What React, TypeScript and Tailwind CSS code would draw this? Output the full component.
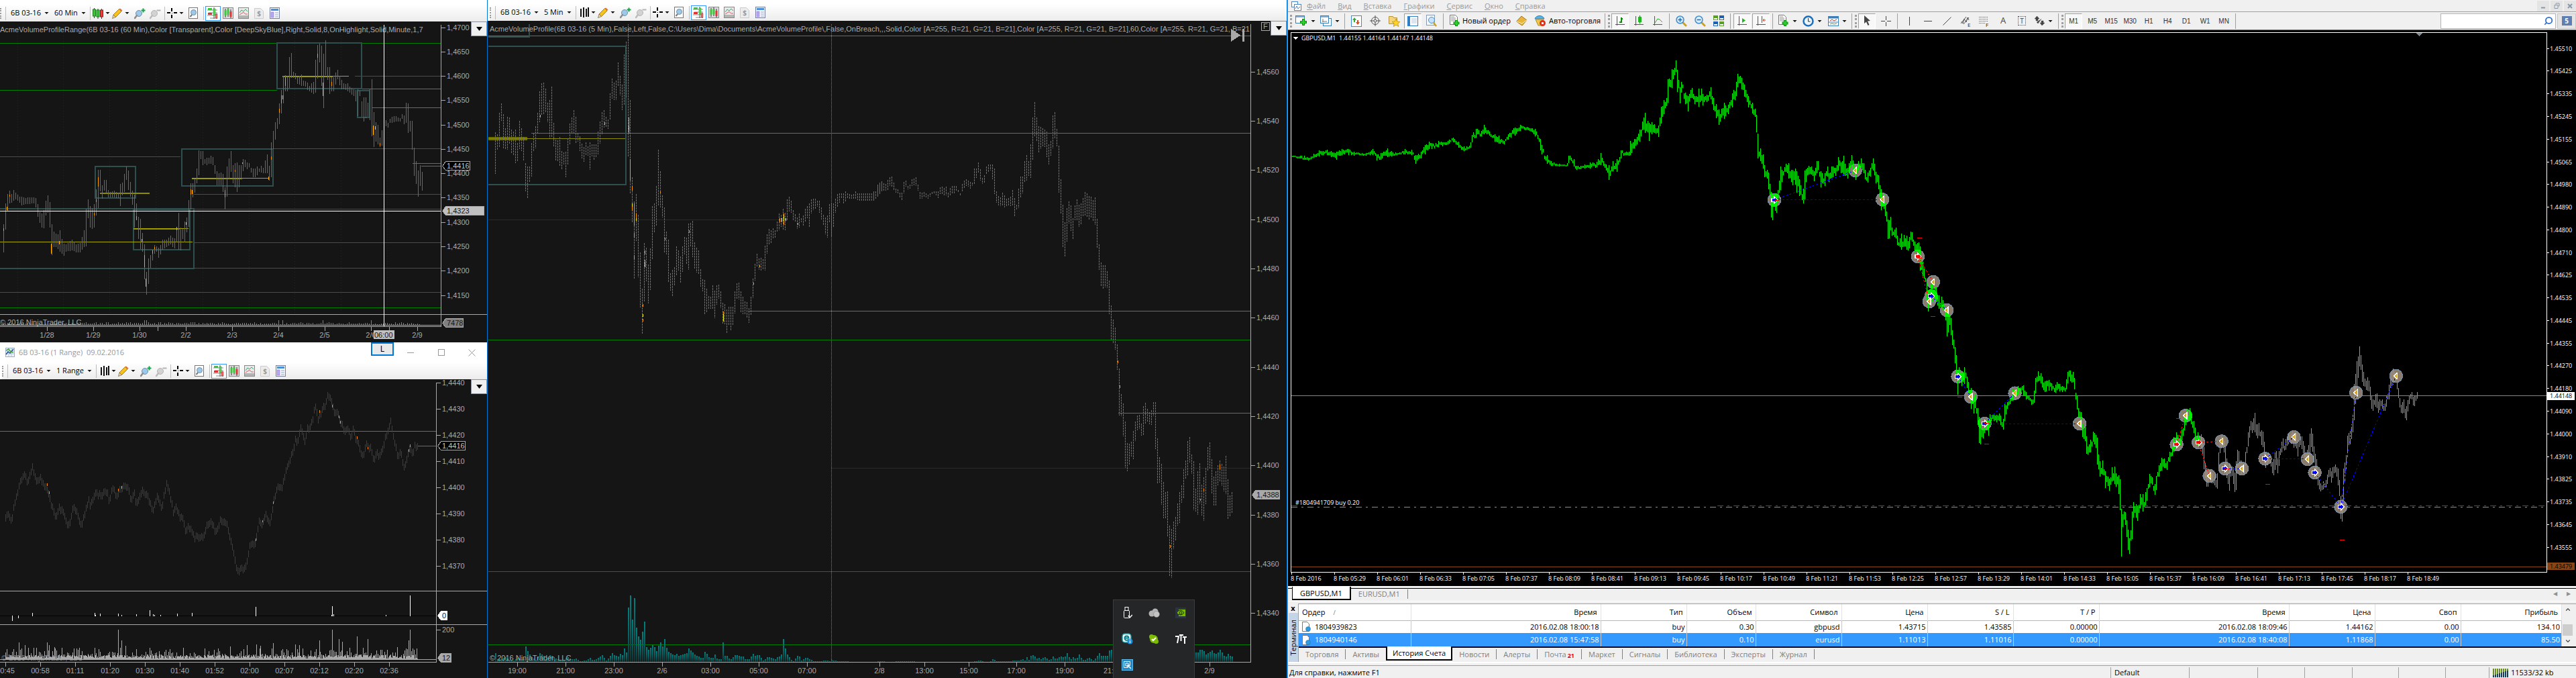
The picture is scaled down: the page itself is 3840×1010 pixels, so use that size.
import React from 'react'
import { ChevronDown, ChevronUp, Search } from 'lucide-react'

type Bar = [number, number, number]
type Point = [number, number]

type Frame = {
    x0: number
    y0: number
    kx: number
    ky: number
}

// every series keeps its own units, a frame turns them into pixels
const HOUR: Frame = { x0: 0, y0: 0, kx: 0.4656, ky: 1 / 3 }
const RANGE: Frame = { x0: 0, y0: 500, kx: 0.4656, ky: 1 / 3 }
const FIVE_A: Frame = { x0: 720, y0: 0, kx: 0.38265, ky: 1 / 3 }
const FIVE_B: Frame = { x0: 1300, y0: 0, kx: 0.40816, ky: 1 / 3 }
const MT_A: Frame = { x0: 1920, y0: 0, kx: 0.61224, ky: 1 / 3 }
const MT_B: Frame = { x0: 2560, y0: 220, kx: 0.45918, ky: 0.40816 }
const MT_C: Frame = { x0: 3180, y0: 460, kx: 0.42092, ky: 1 / 3 }

const HOUR_BARS: Bar[] = [
    [10,1003,1125],[16,912,1030],[22,870,945],[29,850,905],[35,868,905],[42,850,893],[50,862,888],[60,880,900],[68,878,915],[80,884,910],
    [92,880,910],[105,884,905],[112,880,915],[118,900,960],[125,948,990],[131,955,1010],[138,945,1025],[145,900,960],[151,870,940],[158,900,1010],
    [164,1000,1140],[171,1035,1100],[178,1044,1100],[184,1048,1110],[190,1025,1120],[197,1070,1130],[203,1090,1142],[210,1092,1120],[222,1078,1120],
    [229,1070,1115],[242,1092,1125],[255,1085,1125],[262,1055,1112],[268,1028,1100],[274,935,1100],[281,888,965],[288,925,1020],[294,932,1020],
    [300,912,1015],[307,840,955],[313,758,925],[319,755,850],[326,830,885],[332,805,850],[338,798,860],[345,850,880],[352,858,878],[364,852,880],
    [377,862,882],[384,820,920],[390,818,870],[396,780,860],[403,744,800],[409,758,845],[415,808,870],[422,850,905],[428,865,1020],[435,905,970],
    [441,968,1060],[448,978,1110],[454,1036,1110],[461,1090,1245],[467,1220,1318],[474,1155,1265],[480,1140,1195],[487,1115,1160],[493,1095,1130],
    [499,1100,1118],[506,1108,1148],[512,1098,1135],[519,1070,1112],[532,1070,1100],[545,1052,1090],[557,1070,1110],[564,1015,1080],[570,945,1112],
    [577,1018,1115],[583,1025,1065],[590,990,1080],[596,975,1035],[602,905,1020],[609,820,935],[615,820,880],[622,800,860],[628,760,820],
    [635,672,780],[641,675,705],[648,675,735],[654,710,728],[660,706,735],[667,705,730],[674,697,730],[680,700,735],[686,735,770],[693,765,825],
    [699,775,825],[706,770,825],[712,775,850],[719,840,935],[725,745,880],[731,712,800],[738,673,765],[744,740,815],[751,730,835],[757,725,855],
    [764,738,835],[770,740,800],[776,712,765],[783,715,745],[789,725,755],[796,730,745],[802,750,765],[809,752,790],[815,755,790],[822,745,780],
    [828,755,765],[835,742,768],[841,752,770],[848,715,770],[854,690,770],[860,750,805],[867,635,790],[873,588,665],[880,545,620],[886,530,575],
    [893,458,550],[899,405,505],[905,340,465],[912,335,405],[918,350,405],[925,255,390],[931,232,345],[938,322,345],[944,325,350],[950,345,370],
    [957,340,375],[963,330,380],[970,360,380],[977,362,385],[983,370,400],[990,385,405],[996,372,412],[1002,370,418],[1009,262,410],[1015,200,350],
    [1021,195,265],[1028,205,380],[1034,245,490],[1041,178,330],[1047,300,350],[1054,300,420],[1060,345,405],[1067,345,405],[1073,325,375],
    [1079,310,350],[1086,340,378],[1092,355,395],[1099,373,395],[1105,375,400],[1112,372,405],[1118,388,410],[1124,392,420],[1131,400,425],
    [1137,402,445],[1144,398,515],[1150,400,420],[1157,455,520],[1163,435,540],[1170,435,525],[1176,460,520],[1182,405,525],[1189,350,605],
    [1195,495,655],[1201,545,630],[1208,555,640],[1215,615,655],[1221,585,650],[1228,545,600],[1234,535,560],[1240,550,570],[1247,530,545],
    [1254,520,545],[1266,520,540],[1279,530,540],[1286,508,528],[1292,518,552],[1299,455,545],[1305,462,590],[1311,540,578],[1318,540,665],
    [1324,655,780],[1331,720,820],[1337,765,878],[1343,735,825],[1350,770,850],[1356,698,845],
]

const HOUR_SPECKS: Bar[] = [
    [10,1020,1030],[22,925,935],[29,870,875],[164,1090,1130],[190,1078,1090],[300,950,960],[307,890,900],[313,792,832],[435,965,980],[454,1068,1078],
    [461,1140,1190],[467,1245,1278],[487,1118,1130],[493,1105,1110],[564,1015,1025],[596,992,1002],[609,845,868],[615,850,865],[719,848,880],
    [751,760,766],[776,725,730],[860,790,800],[867,700,712],[893,485,500],[899,425,458],[905,425,440],[912,345,380],[1015,240,255],[1034,370,425],
    [1060,365,380],[1195,560,600],[1201,565,575],[1215,640,648],[1228,550,560],
]

const RANGE_LINE: Point[] = [
    [18,815],[27,790],[38,830],[48,735],[65,655],[78,620],[90,655],[103,590],[118,660],[128,625],[140,670],[150,680],[160,735],[178,810],[190,760],
    [205,800],[220,850],[238,755],[258,850],[275,780],[283,725],[290,755],[305,700],[320,715],[340,695],[350,730],[362,680],[375,715],[388,680],
    [408,670],[420,730],[428,695],[438,755],[455,690],[470,715],[490,775],[505,720],[518,770],[534,650],[555,780],[565,770],[577,820],[583,805],
    [595,875],[603,850],[625,910],[630,895],[640,900],[650,895],[668,835],[678,830],[690,885],[706,820],[722,830],[735,890],[750,990],[763,1060],
    [770,1040],[785,1045],[800,940],[818,935],[830,830],[840,840],[853,800],[863,840],[878,730],[890,670],[902,690],[915,610],[935,530],[948,455],
    [953,480],[963,410],[975,480],[985,410],[990,430],[1011,310],[1018,375],[1025,360],[1040,310],[1050,265],[1058,280],[1070,335],[1080,335],
    [1100,420],[1115,425],[1125,450],[1130,415],[1148,490],[1160,540],[1175,485],[1185,500],[1198,555],[1206,520],[1215,545],[1230,475],[1240,430],
    [1250,380],[1262,460],[1274,545],[1282,510],[1296,595],[1310,500],[1322,525],[1330,490],[1337,490],
]

const RANGE_SPECKS: Bar[] = [
    [151,660,669],[156,696,705],[377,684,693],[388,672,681],[819,906,915],[839,824,832],[875,741,750],[1023,333,342],[1064,309,318],[1084,357,366],
    [1088,381,390],[1142,450,459],[1178,497,504],[1309,507,516],[1313,486,495],
]

const RANGE_DELTA: Point[] = [
    [38,1272],[59,1260],[104,1239],[302,1239],[306,1247],[319,1242],[378,1242],[388,1248],[435,1245],[480,1227],[490,1245],[495,1248],[514,1248],
    [568,1242],[615,1239],[819,1212],[1062,1248],[1064,1209],[1068,1245],[1236,1248],[1313,1161],
]

const RANGE_VOLUME: Point[] = [
    [61,1370],[79,1382],[150,1371],[156,1383],[174,1392],[236,1398],[302,1395],[377,1315],[388,1362],[402,1386],[436,1400],[480,1395],[655,1397],
    [736,1389],[790,1383],[820,1380],[833,1385],[875,1374],[944,1380],[957,1382],[1023,1362],[1064,1315],[1084,1355],[1096,1368],[1142,1344],
    [1178,1356],[1272,1391],[1309,1361],[1313,1314],
]

const FIVE_BARS_A: Bar[] = [
    [48,590,775],[56,600,665],[64,500,655],[72,460,530],[80,515,675],[88,580,665],[96,515,665],[104,525,635],[111,580,685],[119,590,690],[127,578,728],
    [135,645,720],[143,525,655],[151,580,675],[158,612,720],[166,735,860],[174,745,885],[182,745,805],[190,625,785],[198,590,655],[206,558,660],
    [213,500,590],[221,402,540],[229,370,510],[237,370,510],[244,395,500],[252,460,545],[260,447,620],[268,382,610],[276,565,655],[284,630,720],
    [292,625,720],[299,612,740],[307,678,752],[315,680,730],[323,678,795],[331,612,730],[339,545,630],[346,525,590],[354,492,595],[362,525,640],
    [370,600,630],[378,610,675],[386,645,710],[394,660,720],[402,633,690],[410,660,695],[417,633,762],[425,645,690],[433,645,718],[441,645,697],
    [449,578,685],[457,535,630],[464,500,595],[472,492,565],[480,525,565],[488,535,575],[495,415,530],[503,348,435],[511,370,445],[519,360,445],
    [527,270,375],[535,348,430],[543,382,497],[550,237,465],[558,183,430],[566,110,720],[573,435,860],[581,790,985],[589,900,1245],[597,865,1070],
    [605,965,1245],[613,1140,1380],[621,1305,1500],[629,1062,1325],[636,1107,1255],[644,1185,1355],[652,1107,1290],[660,910,1150],[668,910,1025],
    [676,823,1005],[683,667,915],[691,765,925],[699,878,970],[707,930,1135],[715,1042,1135],[723,1075,1270],[731,1240,1300],[738,1205,1322],
    [746,1195,1270],[754,1095,1225],[762,1120,1205],[770,1150,1270],[778,1095,1205],[786,1053,1125],[793,1062,1180],[801,997,1205],[809,997,1092],
    [817,987,1150],[825,1095,1205],[833,1107,1215],[840,1120,1225],[848,1205,1280],[856,1250,1300],[864,1250,1412],[872,1293,1390],[880,1327,1380],
    [888,1325,1375],[895,1272,1380],[903,1300,1420],[911,1272,1355],[919,1272,1330],[927,1305,1380],[935,1360,1455],[943,1360,1445],[950,1383,1488],
    [958,1370,1445],[966,1370,1480],[974,1372,1445],[982,1293,1390],[990,1260,1325],[997,1262,1335],[1005,1305,1400],[1013,1327,1400],
    [1021,1350,1400],[1029,1350,1420],[1037,1383,1445],[1045,1315,1400],[1052,1240,1325],[1060,1173,1245],[1068,1130,1185],[1076,1160,1205],
    [1084,1150,1205],[1092,1160,1200],[1099,1095,1205],[1107,1042,1125],[1115,1020,1090],[1123,1030,1085],[1131,1020,1060],[1138,1030,1060],
    [1146,987,1035],[1154,953,1025],[1162,960,1010],[1170,930,1025],[1178,953,1025],[1185,888,980],[1193,878,940],[1201,898,950],[1209,942,985],
    [1217,960,990],[1225,975,1025],[1232,953,1015],[1240,975,990],[1248,963,1005],[1256,930,985],[1264,920,970],[1272,908,1018],[1280,888,940],
    [1295,888,930],[1303,898,920],[1311,898,950],[1319,930,980],[1327,963,1005],[1335,975,1050],[1342,963,1058],[1350,908,985],[1358,908,1058],
    [1366,908,1005],[1374,885,940],[1382,865,920],[1397,865,885],[1405,865,907],[1413,855,895],[1421,865,885],[1440,872,885],[1452,855,885],
    [1460,865,893],[1480,865,893],[1500,865,893],[1520,865,893],[1530,855,885],[1538,823,875],[1553,810,855],[1565,825,850],
]

const FIVE_SPECKS_A: Bar[] = [
    [221,513,521],[472,545,555],[566,525,595],[573,712,805],[581,832,850],[581,920,938],[589,908,1005],[589,1042,1058],[589,1140,1158],[597,955,985],
    [621,1360,1368],[621,1425,1434],[629,1120,1135],[629,1160,1172],[691,855,862],[707,1062,1072],[801,1030,1038],[935,1393,1405],[1052,1262,1270],
    [1076,1185,1192],[1154,975,990],[1162,985,990],[1170,953,1003],[1225,995,1003],
]

const FIVE_YELLOW_A: Bar[] = [
    [566,565,580],[581,908,920],[597,975,985],[621,1404,1414],[629,1173,1192],[935,1405,1435],[1162,975,985],[1170,963,985],[1178,975,985],
]

const FIVE_BARS_B: Bar[] = [
    [5,855,893],[13,855,885],[21,823,875],[29,820,860],[36,810,850],[44,823,850],[51,823,850],[58,800,850],[66,790,820],[73,790,840],[80,823,850],
    [88,850,860],[95,845,860],[102,865,885],[110,860,893],[117,798,850],[124,810,825],[132,840,850],[146,798,825],[154,798,825],[161,790,830],
    [168,832,855],[176,865,893],[190,858,875],[205,870,885],[220,855,860],[235,855,870],[242,855,885],[249,832,860],[264,840,870],[271,832,870],
    [278,865,885],[286,832,865],[300,832,860],[308,830,845],[315,855,860],[322,865,870],[330,810,850],[345,800,825],[359,815,840],[367,815,825],
    [374,735,820],[381,755,785],[388,723,770],[396,765,810],[403,800,820],[411,778,810],[418,735,770],[432,735,760],[440,735,805],[447,755,875],
    [454,865,905],[462,878,917],[470,885,917],[477,855,917],[484,878,925],[491,890,917],[506,878,917],[513,845,917],[520,888,970],[528,920,930],
    [535,832,925],[543,778,870],[550,790,860],[557,712,805],[565,690,805],[572,725,780],[580,625,795],[587,502,695],[594,447,590],[602,545,640],
    [609,568,685],[617,568,655],[631,580,655],[638,590,705],[646,658,740],[653,625,685],[660,502,655],[668,502,605],[675,590,660],[682,658,885],
    [690,832,970],[697,930,1125],[705,1010,1150],[712,910,1060],[719,898,985],[727,922,1040],[734,987,1070],[741,908,965],[749,888,985],
    [756,920,1018],[763,908,995],[771,878,960],[778,855,960],[785,865,970],[793,878,985],[800,878,970],[807,895,985],[815,878,1005],[822,997,1125],
    [830,1120,1225],[837,1185,1290],[852,1185,1280],[859,1220,1285],[866,1260,1420],[874,1393,1540],[881,1437,1530],[888,1470,1565],
    [896,1557,1672],[903,1667,1895],[910,1777,1850],[918,1808,1970],[925,1900,2115],[933,2005,2100],[940,1975,2070],[947,1975,2030],[954,1920,2050],
    [962,1875,1950],[969,1855,1915],[976,1855,1915],[984,1900,1950],[991,1800,1940],[998,1800,1885],[1006,1833,1885],[1013,1845,1895],
    [1020,1833,1895],[1028,1788,1850],[1035,1800,2030],[1042,1975,2170],[1050,2055,2150],[1057,2075,2270],[1065,2172,2325],[1072,2205,2310],
    [1079,2195,2405],[1087,2385,2610],[1094,2360,2575],[1101,2328,2435],[1109,2305,2410],[1116,2240,2335],[1123,2195,2335],[1131,2165,2225],
    [1138,2085,2225],[1145,2055,2130],[1153,1953,2120],[1160,1953,2055],[1167,2040,2120],[1175,2065,2310],[1182,2205,2280],[1189,2095,2300],
    [1197,2065,2240],[1204,2180,2310],[1211,2130,2325],[1219,2085,2235],[1226,1985,2080],[1233,1975,2095],[1241,2065,2225],[1248,2140,2260],
    [1255,2105,2260],[1263,2075,2150],[1270,2055,2150],[1277,2075,2170],[1285,2085,2195],[1292,2030,2205],[1299,2150,2325],[1307,2225,2300],
    [1314,2195,2290],
]

const FIVE_SPECKS_B: Bar[] = [
    [896,1611,1620],[903,1722,1731],[1087,2437,2445],[1197,2229,2235],[1211,2184,2193],[1270,2075,2093],
]

const FIVE_VOLUME_A: Point[] = [
    [48,38],[56,10],[72,12],[88,22],[104,8],[120,5],[135,20],[150,12],[159,14],[167,80],[175,42],[190,20],[206,8],[221,40],[237,25],[245,10],[262,32],
    [270,25],[285,12],[300,10],[315,8],[325,22],[340,15],[350,8],[360,15],[378,3],[402,6],[418,18],[426,5],[440,12],[465,30],[480,5],[504,42],
    [512,28],[528,24],[535,38],[543,30],[551,66],[559,38],[567,294],[575,297],[582,174],[590,300],[598,128],[606,110],[614,96],[622,147],[629,186],
    [637,50],[645,55],[661,76],[669,65],[677,42],[684,78],[692,87],[700,66],[708,111],[716,51],[731,38],[747,28],[755,38],[763,25],[786,38],[795,40],
    [802,66],[810,48],[818,42],[826,30],[850,18],[858,20],[865,54],[873,30],[880,18],[896,18],[904,38],[912,10],[928,12],[935,102],[943,15],[951,30],
    [959,12],[967,12],[983,33],[998,25],[1013,24],[1021,12],[1037,12],[1053,38],[1061,26],[1069,33],[1077,30],[1092,3],[1108,24],[1123,18],
    [1139,12],[1147,24],[1155,24],[1162,33],[1170,111],[1178,51],[1186,30],[1202,6],[1210,3],[1225,30],[1233,24],[1241,4],[1257,21],[1272,12],
    [1288,3],[1310,3],[1340,6],[1350,3],[1358,10],[1366,6],[1380,3],[1420,3],[1430,0],[1530,0],[1545,4],
]

const FIVE_VOLUME_B: Point[] = [
    [20,4],[40,2],[60,0],[100,3],[120,2],[150,3],[160,0],[365,0],[372,3],[395,6],[405,0],[430,0],[440,14],[450,4],[470,3],[500,3],[520,7],[535,6],
    [550,12],[557,6],[565,22],[572,8],[580,30],[588,30],[596,20],[603,12],[610,20],[618,6],[625,25],[633,18],[640,15],[648,6],[660,25],[668,12],
    [690,25],[697,20],[705,25],[712,40],[720,15],[727,12],[735,25],[742,12],[750,22],[757,38],[765,8],[780,10],[790,18],[808,6],[816,20],[830,42],
    [838,20],[845,28],[860,28],[867,60],[875,50],[882,60],[1175,40],[1190,42],[1197,57],[1205,54],[1212,48],[1220,30],[1228,42],[1242,54],[1250,30],
    [1265,45],[1272,60],[1280,30],[1292,24],[1300,39],[1307,24],[1317,24],
]

const MT_BARS_A: Bar[] = [
    [9,695,700],[40,695,712],[47,705,715],[60,690,703],[75,672,695],[93,668,690],[105,675,700],[116,680,713],[130,665,690],[145,665,690],[160,680,692],
    [190,685,693],[206,665,690],[215,690,716],[225,685,710],[240,662,700],[250,675,695],[270,680,688],[283,665,688],[300,670,690],[310,695,730],
    [322,680,705],[331,650,690],[342,632,662],[350,640,662],[365,630,655],[375,635,650],[390,625,640],[400,615,630],[415,635,660],[428,655,672],
    [443,640,660],[447,600,630],[458,572,610],[468,590,608],[477,555,595],[490,590,605],[503,602,630],[512,605,640],[525,630,642],[535,600,620],
    [550,570,605],[556,572,590],[565,558,580],[585,570,580],[600,575,605],[612,610,660],[618,660,695],[630,695,730],[640,720,738],[660,733,742],
    [678,735,742],[683,685,720],[695,710,740],[700,740,755],[720,735,750],[735,725,750],[750,725,745],[759,678,735],[768,725,740],[779,740,805],
    [790,720,760],[800,712,765],[810,670,700],[830,680,692],[833,610,690],[842,620,660],[855,580,630],[868,502,590],[877,550,630],[885,545,595],
    [892,555,590],[901,560,608],[907,480,550],[915,440,500],[925,340,450],[935,305,380],[943,268,310],[948,330,450],[953,390,460],[957,360,400],
    [965,410,455],[973,430,497],[981,385,430],[990,435,465],[1000,390,475],[1004,385,440],[1010,430,475],[1020,420,450],[1028,390,440],
    [1035,440,490],[1041,465,525],[1048,490,557],[1055,485,520],[1062,455,530],[1070,470,510],[1080,420,480],[1090,370,430],[1095,315,370],
    [1102,340,390],[1110,380,430],[1120,430,480],[1130,460,505],[1137,490,520],[1140,520,610],[1143,610,705],
]

const MT_BARS_B: Bar[] = [
    [130,0,36],[138,0,45],[147,20,70],[152,65,108],[160,80,105],[165,90,150],[169,130,165],[173,160,250],[178,170,262],[185,165,225],[191,170,235],
    [197,150,185],[203,65,160],[210,85,110],[221,60,85],[230,55,110],[237,80,118],[243,80,135],[250,70,120],[256,85,160],[265,115,175],[278,150,200],
    [283,75,185],[290,75,100],[297,65,95],[306,70,95],[313,85,120],[322,48,90],[327,50,75],[334,85,145],[340,95,125],[347,95,140],[356,65,100],
    [362,100,128],[368,70,110],[375,68,105],[383,75,100],[392,32,80],[400,55,90],[408,25,100],[415,70,100],[420,80,118],[428,50,80],[434,22,55],
    [440,50,100],[447,75,120],[455,50,80],[466,38,70],[473,50,85],[480,90,120],[488,90,125],[497,70,100],[503,32,75],[509,60,98],[515,98,140],
    [522,100,150],[530,150,225],[540,170,220],[545,210,255],[552,260,330],[556,270,338],[560,242,295],[566,295,320],[575,300,325],[580,290,330],
    [585,340,370],[592,330,360],[597,310,372],[603,308,360],[608,335,355],[613,320,370],[621,330,375],[627,305,330],[632,310,345],[640,345,380],
    [648,348,385],[653,345,400],[657,360,445],[664,400,455],[668,440,490],[672,440,460],[677,480,545],[683,520,597],[690,505,560],[697,490,560],
    [704,510,545],[709,505,560],[716,540,590],[725,540,575],[733,560,595],[743,580,690],[750,605,665],[757,620,680],[763,680,730],[769,720,770],
    [775,760,840],[779,810,900],[783,800,850],[790,830,870],[800,798,860],[808,830,870],[815,860,895],[822,875,950],[830,910,975],[836,900,945],
    [843,940,990],[849,985,1080],[853,1010,1080],[860,1030,1065],[868,1000,1030],[873,990,1020],[879,1000,1050],[884,970,1005],[895,975,995],
    [905,975,1000],[913,968,990],[920,980,1015],[927,990,1028],[932,925,990],[940,930,950],[950,910,930],[958,880,920],[968,885,905],[975,870,900],
    [983,875,895],[991,862,900],[1000,890,915],[1010,905,920],[1020,920,940],[1027,890,930],[1032,835,890],[1040,815,850],[1048,820,855],
    [1053,835,870],[1060,855,890],[1068,850,885],[1076,848,885],[1085,862,885],[1095,870,895],[1103,852,880],[1112,865,890],[1120,870,890],
    [1130,860,890],[1135,820,860],[1143,808,850],[1150,830,855],[1155,815,850],[1160,860,900],[1167,910,955],[1172,960,990],[1180,965,1010],
    [1185,1020,1065],[1192,1010,1060],[1198,1060,1125],[1205,1085,1110],[1212,1060,1110],[1219,1035,1070],[1225,1045,1085],[1231,1045,1150],
    [1237,1130,1175],[1242,1150,1205],[1250,1140,1190],[1258,1180,1240],[1265,1195,1225],[1271,1210,1250],[1278,1170,1215],[1287,1155,1220],
    [1295,1200,1240],[1300,1190,1240],[1306,1210,1320],[1310,1315,1500],[1314,1340,1385],[1322,1320,1360],[1328,1360,1420],[1333,1400,1475],
    [1337,1430,1480],[1341,1395,1430],[1345,1330,1430],[1350,1290,1340],[1357,1300,1345],[1363,1310,1360],[1370,1265,1310],[1380,1265,1325],
    [1388,1260,1305],[1395,1235,1280],[1402,1190,1235],[1410,1200,1225],[1418,1235,1270],[1425,1190,1240],[1433,1155,1195],[1442,1130,1175],
    [1450,1135,1165],[1458,1145,1175],[1467,1110,1145],[1475,1100,1125],[1482,1040,1100],[1490,1040,1090],[1500,1060,1090],[1508,1020,1060],
    [1515,970,1030],[1522,955,1000],[1531,945,990],[1538,970,1010],[1546,1000,1040],[1552,1035,1080],[1560,1040,1085],[1566,1045,1090],
]

const MT_BARS_C: Bar[] = [
    [240,560,625],[246,600,650],[251,625,740],[255,705,755],[261,715,810],[266,715,780],[273,720,770],[280,740,780],[288,755,785],[294,770,800],
    [299,710,800],[303,610,670],[308,580,630],[313,565,610],[319,580,615],[326,620,710],[332,690,770],[340,690,810],[350,705,740],[355,710,790],
    [360,740,825],[365,655,800],[369,625,685],[375,640,710],[383,680,735],[392,690,735],[398,625,690],[404,565,630],[410,530,580],[417,495,530],
    [422,510,560],[427,480,530],[431,462,555],[437,545,570],[441,500,580],[446,515,555],[452,540,600],[460,550,620],[465,615,680],[469,650,715],
    [477,640,685],[485,650,690],[493,690,740],[498,665,740],[503,630,705],[508,640,690],[512,675,750],[517,620,680],[525,595,640],[530,580,620],
    [537,590,635],[544,570,610],[551,552,600],[558,560,600],[565,545,590],[570,560,640],[578,555,620],[583,590,665],[590,570,600],[597,570,625],
    [603,600,650],[608,620,665],[613,640,690],[620,610,660],[626,545,650],[631,530,600],[636,570,655],[641,640,700],[645,650,735],[650,680,765],
    [655,750,795],[660,775,810],[665,785,815],[672,770,805],[680,775,800],[685,750,790],[690,725,755],[695,708,740],[702,730,780],[707,700,745],
    [715,695,730],[721,710,750],[726,715,800],[731,790,850],[735,850,960],[740,820,945],[744,705,850],[750,680,740],[755,640,700],[759,540,650],
    [764,560,590],[768,545,605],[773,510,575],[778,460,540],[783,290,480],[788,290,395],[792,220,345],[797,210,295],[802,152,240],[806,215,275],
    [811,255,335],[816,290,345],[821,320,345],[826,320,368],[831,298,360],[836,335,370],[840,355,420],[845,400,455],[850,410,450],[856,380,435],
    [863,378,440],[868,420,465],[873,400,445],[880,400,440],[887,430,455],[893,420,450],[898,360,420],[905,340,405],[910,310,350],[916,265,345],
    [921,268,330],[926,290,320],[932,320,345],[937,340,380],[942,390,430],[947,430,460],[953,415,465],[958,405,460],[963,455,490],[968,430,498],
    [973,400,440],[978,382,415],[987,372,400],[992,400,440],[997,380,430],[1006,370,395],
]

type Deal = { f: Frame; at: Point; kind: 'buy' | 'sell' | 'close' }

const DEALS: Deal[] = [
    { f: MT_B, at: [185, 191], kind: 'buy' },
    { f: MT_B, at: [448, 83], kind: 'close' },
    { f: MT_B, at: [536, 189], kind: 'close' },
    { f: MT_B, at: [651, 397], kind: 'sell' },
    { f: MT_B, at: [701, 490], kind: 'close' },
    { f: MT_B, at: [688, 561], kind: 'close' },
    { f: MT_B, at: [694, 542], kind: 'buy' },
    { f: MT_B, at: [745, 593], kind: 'close' },
    { f: MT_B, at: [781, 835], kind: 'buy' },
    { f: MT_B, at: [823, 909], kind: 'close' },
    { f: MT_B, at: [868, 1007], kind: 'buy' },
    { f: MT_B, at: [966, 896], kind: 'close' },
    { f: MT_B, at: [1176, 1007], kind: 'close' },
    { f: MT_B, at: [1491, 1083], kind: 'sell' },
    { f: MT_B, at: [1520, 978], kind: 'close' },
    { f: MT_B, at: [1562, 1076], kind: 'sell' },
    { f: MT_C, at: [313, 592], kind: 'close' },
    { f: MT_C, at: [325, 714], kind: 'buy' },
    { f: MT_C, at: [270, 747], kind: 'close' },
    { f: MT_C, at: [385, 714], kind: 'close' },
    { f: MT_C, at: [467, 670], kind: 'buy' },
    { f: MT_C, at: [569, 573], kind: 'close' },
    { f: MT_C, at: [617, 672], kind: 'close' },
    { f: MT_C, at: [643, 732], kind: 'buy' },
    { f: MT_C, at: [735, 885], kind: 'buy' },
    { f: MT_C, at: [789, 375], kind: 'close' },
    { f: MT_C, at: [931, 300], kind: 'close' },
]

type Link = { f: Frame; p: [number, number, number, number]; color: string }

const LINKS: Link[] = [
    { f: MT_B, p: [185, 191, 448, 83], color: '#0000ff' },
    { f: MT_B, p: [185, 191, 536, 189], color: '#0000ff' },
    { f: MT_B, p: [868, 1007, 1176, 1007], color: '#0000ff' },
    { f: MT_B, p: [868, 1007, 966, 896], color: '#0000ff' },
    { f: MT_B, p: [781, 835, 823, 909], color: '#0000ff' },
    { f: MT_B, p: [694, 542, 745, 593], color: '#0000ff' },
    { f: MT_B, p: [651, 397, 701, 490], color: '#ff0000' },
    { f: MT_B, p: [651, 397, 688, 561], color: '#ff0000' },
    { f: MT_B, p: [1491, 1083, 1520, 978], color: '#ff0000' },
    { f: MT_C, p: [230, 597, 313, 592], color: '#ff0000' },
    { f: MT_C, p: [230, 597, 270, 747], color: '#ff0000' },
    { f: MT_C, p: [325, 714, 385, 714], color: '#0000ff' },
    { f: MT_C, p: [467, 670, 569, 573], color: '#0000ff' },
    { f: MT_C, p: [467, 670, 617, 672], color: '#0000ff' },
    { f: MT_C, p: [643, 732, 735, 885], color: '#0000ff' },
    { f: MT_C, p: [735, 885, 789, 375], color: '#0000ff' },
    { f: MT_C, p: [735, 885, 931, 300], color: '#0000ff' },
]

const STOPS: { f: Frame; at: Point }[] = [
    { f: MT_B, at: [656, 329] },
    { f: MT_B, at: [656, 403] },
    { f: MT_B, at: [191, 191] },
    { f: MT_B, at: [700, 616] },
    { f: MT_B, at: [787, 908] },
    { f: MT_B, at: [874, 1004] },
    { f: MT_B, at: [874, 1081] },
    { f: MT_B, at: [1497, 988] },
    { f: MT_C, at: [331, 714] },
    { f: MT_C, at: [474, 670] },
    { f: MT_C, at: [474, 784] },
    { f: MT_C, at: [740, 1033] },
    { f: MT_C, at: [650, 886] },
]

const noise = (i: number) => {
    const v = Math.sin(i * 12.9898 + 4.1) * 43758.5453
    return v - Math.floor(v)
}

const px = (f: Frame, x: number) => Math.round(f.x0 + x * f.kx) + 0.5
const py = (f: Frame, y: number) => Math.round(f.y0 + y * f.ky)

// fills the gaps between the stored bars so that they stand `step` pixels apart,
// ragged: the filled-in bars only cover a part of the range around them
const resample = (bars: Bar[], f: Frame, step: number, ragged = false): Bar[] => {
    const out: Bar[] = []
    let k = 0
    const last = bars[bars.length - 1][0]
    for (let x = bars[0][0]; x <= last; x += step / f.kx) {
        while (k < bars.length - 2 && bars[k + 1][0] < x) k++
        const [xa, ha, la] = bars[k]
        const [xb, hb, lb] = bars[k + 1]
        const t = Math.min(1, Math.max(0, (x - xa) / (xb - xa)))
        const hi = ha + (hb - ha) * t
        const lo = la + (lb - la) * t
        const near = Math.min(x - xa, xb - x) * f.kx < step / 2
        if (ragged && !near) {
            const span = (lo - hi) * (0.3 + noise(x) * 0.4)
            const top = hi + (lo - hi - span) * noise(x + 7)
            out.push([x, top, top + span])
        } else {
            out.push([x, hi, lo])
        }
    }
    return out
}

const barPath = (bars: Bar[], f: Frame) => bars.map(([x, hi, lo]) => `M${px(f, x)} ${py(f, hi)}V${py(f, lo) + 1}`).join('')

const fromLine = (line: Point[], half: number): Bar[] => line.map(([x, y]) => [x, y - half, y + half])

const wiggle = (bars: Bar[], amount: number): Bar[] =>
    bars.map(([x, hi, lo], i) => {
        const d = (noise(i) - 0.5) * amount
        return [x, hi + d, lo + d]
    })

type LevelProps = {
    y: number
    from: number
    to: number
    color: string
}

const Level: React.FC<LevelProps> = ({ y, from, to, color }) => (
    <path d={`M${from} ${y + 0.5}H${to}`} stroke={color} />
)

type PriceAxisProps = {
    x: number
    labels: [string, number][]
}

const PriceAxis: React.FC<PriceAxisProps> = ({ x, labels }) => (
    <g>
        {labels.map(([label, y]) => (
            <g key={label}>
                <path d={`M${x} ${y + 0.5}h6`} stroke="#a9a9a9" />
                <text x={x + 8} y={y + 4} fill="#a9a9a9">{label}</text>
            </g>
        ))}
    </g>
)

type TimeAxisProps = {
    y: number
    labels: [string, number][]
}

const TimeAxis: React.FC<TimeAxisProps> = ({ y, labels }) => (
    <g textAnchor="middle">
        {labels.map(([label, x]) => (
            <g key={label + x}>
                <path d={`M${x + 0.5} ${y}v6`} stroke="#a9a9a9" />
                {label && <text x={x} y={y + 16} fill="#a9a9a9">{label}</text>}
            </g>
        ))}
    </g>
)

type PriceTagProps = {
    x: number
    y: number
    width: number
    label: string
    fill: string
    text: string
    stroke?: string
}

const PriceTag: React.FC<PriceTagProps> = ({ x, y, width, label, fill, text, stroke = '#a9a9a9' }) => (
    <g>
        <path d={`M${x + 0.5} ${y + 0.5}l5 -7h${width}v13h-${width}z`} fill={fill} stroke={stroke} />
        <text x={x + 7} y={y + 4} fill={text}>{label}</text>
    </g>
)

const Caret = () => (
    <svg className="h-[5px] w-[7px] shrink-0" viewBox="0 0 7 5" aria-hidden="true">
        <path d="M0.5 1h6L3.5 4z" fill="#111" />
    </svg>
)

const Divider = () => <span className="h-5 w-px shrink-0 bg-[#bdbdbd]" />

const BarsIcon = () => (
    <svg width="13" height="16" viewBox="0 0 13 16" shapeRendering="crispEdges">
        <path d="M1 2v12M5 0v15M9 2v12M12 0v14" stroke="#111" strokeWidth="1.5" />
    </svg>
)

const CandlesIcon = () => (
    <svg width="16" height="16" viewBox="0 0 16 16">
        <path d="M2.5 0v15M8 1v15M13.5 1v15" stroke="#333" />
        <rect x="0.5" y="2" width="4" height="10" fill="#3cc63c" stroke="#1c7a1c" />
        <rect x="6" y="3" width="4" height="10" fill="#3cc63c" stroke="#1c7a1c" />
        <rect x="11.5" y="3" width="4" height="10" fill="#ee3b3b" stroke="#8c1c1c" />
    </svg>
)

const PencilIcon = () => (
    <svg width="16" height="16" viewBox="0 0 16 16">
        <path d="M2 10 10.5 1.5 14 5 5.5 13.5z" fill="#f6c31c" stroke="#a97a10" />
        <path d="M10.5 1.5 12 0.5 15.5 3.5 14 5z" fill="#e0703a" />
        <path d="M2 10 0.5 15.5 5.5 13.5z" fill="#f0d9b0" stroke="#6b5a3a" strokeWidth="0.7" />
    </svg>
)

type LensProps = {
    sign?: 'plus' | 'minus'
    muted?: boolean
}

const LensIcon: React.FC<LensProps> = ({ sign, muted }) => (
    <svg width="17" height="18" viewBox="0 0 17 18">
        <circle cx="7" cy="9" r="4.5" fill={muted ? '#d2d2d2' : '#9cc8ea'} stroke={muted ? '#b4b4b4' : '#7290a8'} />
        <path d="M4 12 1 16" stroke={muted ? '#bbb' : '#8c8c8c'} strokeWidth="2.5" strokeLinecap="round" />
        {sign === 'plus' && <path d="M13.5 1.5v6M10.5 4.5h6" stroke="#16a34a" strokeWidth="2" />}
        {sign === 'minus' && <path d="M10.5 4.5h6" stroke="#b4b4b4" strokeWidth="2" />}
    </svg>
)

const CrossIcon = () => (
    <svg width="15" height="15" viewBox="0 0 15 15" shapeRendering="crispEdges">
        <path d="M7 0v5M7 10v5M0 7h5M10 7h5" stroke="#000" strokeWidth="2" />
        <path d="M7 7h1" stroke="#000" />
    </svg>
)

const PageLensIcon = () => (
    <svg width="16" height="17" viewBox="0 0 16 17">
        <rect x="1.5" y="0.5" width="13" height="16" fill="#fff" stroke="#777" />
        <circle cx="8.5" cy="7.5" r="4" fill="#9cc8ea" stroke="#7290a8" />
        <path d="M6 11 3.5 14" stroke="#777" strokeWidth="2" />
    </svg>
)

const TraderIcon = () => (
    <svg width="16" height="17" viewBox="0 0 16 17">
        <path d="M0 4h15M2 8h13M0 12h9M4 16h11" stroke="#888" />
        <path d="M10 0v17M14 9v8" stroke="#555" />
        <rect x="1" y="1" width="6" height="3" fill="#3cc63c" />
        <rect x="1" y="8" width="6" height="3" fill="#e03434" />
        <rect x="9" y="2" width="3" height="10" fill="#5fd35f" stroke="#2b8a2b" strokeWidth="0.5" />
        <rect x="12" y="10" width="3" height="6" fill="#e66" stroke="#a33" strokeWidth="0.5" />
    </svg>
)

const BoxedCandlesIcon = () => (
    <svg width="16" height="17" viewBox="0 0 16 17">
        <rect x="0.5" y="0.5" width="15" height="16" fill="#ddd" stroke="#888" />
        <path d="M4 2v13M8 1v13M12 3v13" stroke="#333" />
        <rect x="2.5" y="4" width="3" height="8" fill="#3cc63c" />
        <rect x="6.5" y="3" width="3" height="8" fill="#3cc63c" />
        <rect x="10.5" y="6" width="3" height="8" fill="#e03434" />
    </svg>
)

const BoxedLinesIcon = () => (
    <svg width="16" height="17" viewBox="0 0 16 17">
        <rect x="0.5" y="0.5" width="15" height="16" fill="#e9e9e9" stroke="#888" />
        <rect x="1" y="12" width="14" height="4" fill="#b4b4b4" />
        <path d="M2 8 5 4 8 6 11 3 14 6" fill="none" stroke="#3aa76d" />
        <path d="M2 11 5 9 8 7.5 11 10 14 10" fill="none" stroke="#e05a5a" />
    </svg>
)

const DollarPageIcon = () => (
    <svg width="14" height="16" viewBox="0 0 14 16">
        <path d="M0.5 0.5h9l4 4v11h-13z" fill="#ececec" stroke="#ccc" />
        <text x="7" y="12" textAnchor="middle" fontSize="10" fontWeight="700" fill="#999">$</text>
    </svg>
)

const PropertiesIcon = () => (
    <svg width="15" height="17" viewBox="0 0 15 17">
        <rect x="0.5" y="0.5" width="14" height="16" fill="#f4f8ff" stroke="#777f9a" />
        <rect x="2" y="2" width="11" height="3" fill="#4a90d9" />
        <rect x="2" y="7" width="4" height="8" fill="#b7a6f0" stroke="#8a6de0" strokeWidth="0.5" />
        <path d="M8 8h5M8 11h5M8 14h5" stroke="#9aa7c7" />
    </svg>
)

type NinjaToolbarProps = {
    symbol: string
    interval: string
    icon: React.ReactNode
}

const NinjaToolbar: React.FC<NinjaToolbarProps> = (props) => {
    const { symbol, interval, icon } = props

    return (
        <div className="flex h-[25px] items-center bg-linear-to-b from-white to-[#ececec] font-['Open_Sans',sans-serif] text-[11px] text-black">
            <span className="mr-[6px] h-4 border-l-2 border-dotted border-[#9a9a9a]" />
            <Divider />
            <button className="ml-[7px] flex items-center gap-[5px] whitespace-nowrap" type="button">{symbol}<Caret /></button>
            <button className="ml-[8px] flex items-center gap-[5px] whitespace-nowrap" type="button">{interval}<Caret /></button>
            <span className="w-[6px]" />
            <Divider />
            <button className="flex w-[29px] items-center justify-end gap-[3px]" type="button" aria-label="Chart style">{icon}<Caret /></button>
            <button className="flex w-[29px] items-center justify-end gap-[3px]" type="button" aria-label="Drawing tools"><PencilIcon /><Caret /></button>
            <button className="flex w-[24px] justify-end" type="button" aria-label="Zoom in"><LensIcon sign="plus" /></button>
            <button className="mr-[5px] flex w-[23px] justify-end" type="button" aria-label="Zoom out"><LensIcon sign="minus" muted /></button>
            <Divider />
            <button className="flex w-[28px] items-center justify-end gap-[3px]" type="button" aria-label="Crosshair"><CrossIcon /><Caret /></button>
            <button className="mr-[7px] flex w-[22px] justify-end" type="button" aria-label="Data box"><PageLensIcon /></button>
            <Divider />
            <button className="ml-[2px] flex h-[22px] w-[23px] items-center justify-center border border-[#3399ff] bg-white" type="button" aria-label="Chart trader"><TraderIcon /></button>
            <button className="flex w-[23px] justify-center" type="button" aria-label="Data series"><BoxedCandlesIcon /></button>
            <button className="flex w-[23px] justify-center" type="button" aria-label="Indicators"><BoxedLinesIcon /></button>
            <button className="flex w-[23px] justify-center" type="button" aria-label="Strategies"><DollarPageIcon /></button>
            <button className="flex w-[23px] justify-center" type="button" aria-label="Properties"><PropertiesIcon /></button>
        </div>
    )
}

const MenuDrop = () => (
    <button
        className="absolute right-0 top-0 flex h-[22px] w-[24px] items-center justify-center border border-[#8a8f99] bg-[#f0f0f0]"
        type="button"
        aria-label="Chart menu"
    >
        <svg width="9" height="6" viewBox="0 0 9 6"><path d="M0 0h9L4.5 6z" fill="#000" /></svg>
    </button>
)

const HourChart = () => {
    const bars = resample(HOUR_BARS, HOUR, 3)
    const volume: Bar[] = Array.from({ length: 208 }, (_, i) => {
        const x = 10 + i * 6.44
        const near = [465, 893, 906, 1034, 1189].some((s) => Math.abs(s - x) < 5)
        return [x, 1452 - (near ? 22 : 3 + noise(i) * 9), 1452]
    })

    return (
        <svg className="block h-[478px] w-full bg-[#151515] font-['Liberation_Sans',sans-serif] text-[11px]" shapeRendering="crispEdges" fill="none">
            <g transform="translate(0 -32)">
                {[26, 94, 163, 232, 302, 371, 439, 508, 577].map((x) => (
                    <path key={x} d={`M${x + 0.5} 37V468`} stroke="#242424" strokeDasharray="1 3" />
                ))}
                <text x="0" y="48" fill="#a9a9a9">AcmeVolumeProfileRange(6B 03-16 (60 Min),Color [Transparent],Color [DeepSkyBlue],Right,Solid,8,OnHighlight,Solid,Minute,1,7</text>
                <Level y={64} from={0} to={657} color="#008000" />
                <Level y={134} from={0} to={413} color="#008000" />
                <Level y={233} from={0} to={269} color="#008000" />
                <Level y={113} from={529} to={657} color="#008000" />
                <Level y={221} from={407} to={657} color="#008000" />
                <Level y={289} from={289} to={657} color="#008000" />
                <Level y={311} from={200} to={657} color="#008000" />
                <Level y={361} from={289} to={657} color="#008000" />
                <Level y={399} from={289} to={657} color="#008000" />
                <Level y={435} from={0} to={657} color="#008000" />
                <Level y={458} from={0} to={657} color="#008000" />
                <Level y={132} from={540} to={657} color="#696969" />
                <Level y={160} from={555} to={657} color="#696969" />
                <Level y={243} from={615} to={657} color="#696969" />
                <Level y={247} from={628} to={657} color="#696969" />
                <g stroke="#2f4f4f" strokeWidth="2">
                    <rect x="413" y="64" width="126" height="68" />
                    <rect x="533" y="135" width="18" height="40" />
                    <rect x="271" y="222" width="136" height="55" />
                    <rect x="142" y="248" width="60" height="47" />
                    <rect x="199" y="312" width="84" height="60" />
                    <rect x="-5" y="311" width="294" height="89" />
                </g>
                <path d="M421 114h75M286 266h75M199 341h69M149 288h74" stroke="#8c8c00" strokeWidth="2" />
                <path d="M421 113.5h99M286 265.5h115M199 340.5h82M0 360.5h287" stroke="#a8a800" />
                <path d={barPath(bars, HOUR)} stroke="#696969" />
                <path d={barPath(HOUR_SPECKS, HOUR)} stroke="#ffa500" />
                <path d={barPath(volume, HOUR)} stroke="#808080" />
                <text x="0" y="484" fill="#a9a9a9">© 2016 NinjaTrader, LLC</text>
                <path d="M657.5 37V487M0 468.5H726M0 484.5H657M0 486.5H657" stroke="#a9a9a9" />
                <PriceAxis
                    x={658}
                    labels={[
                        ['1,4700', 41], ['1,4650', 77], ['1,4600', 113], ['1,4550', 149], ['1,4500', 186], ['1,4450', 222],
                        ['1,4400', 258], ['1,4350', 294], ['1,4300', 331], ['1,4250', 367], ['1,4200', 403], ['1,4150', 440],
                    ]}
                />
                <TimeAxis
                    y={487}
                    labels={[
                        ['1/28', 70], ['1/29', 139], ['1/30', 208], ['', 235], ['2/2', 277], ['2/3', 346],
                        ['2/4', 415], ['2/5', 484], ['2/6', 553], ['', 580], ['2/9', 622],
                    ]}
                />
                <path d="M0 314.5H657M572.5 37V486" stroke="#fff" />
                <PriceTag x={659} y={247} width={36} label="1,4416" fill="#000" text="#c8c8c8" />
                <PriceTag x={659} y={314} width={57} label="1,4323" fill="#c0c0c0" text="#151515" />
                <PriceTag x={659} y={481} width={26} label="7478" fill="#808080" text="#151515" />
                <rect x="557" y="492" width="31" height="13" fill="#c0c0c0" />
                <text x="558" y="503" fill="#151515">06:00</text>
            </g>
        </svg>
    )
}

const RangeChart = () => {
    const bars = wiggle(resample(fromLine(RANGE_LINE, 14), RANGE, 2), 20)
    const volume: Bar[] = Array.from({ length: 307 }, (_, i) => {
        const r = noise(i + 40)
        return [18 + i * 4.3, 1446 - 6 - r * r * 46, 1446]
    })
    const base: Bar[] = Array.from({ length: 614 }, (_, i) => [18 + i * 2.15, 1444 - noise(i + 900) * 18, 1446])

    return (
        <svg className="block h-[445px] w-full bg-[#151515] font-['Liberation_Sans',sans-serif] text-[11px]" shapeRendering="crispEdges" fill="none">
            <g transform="translate(0 -565)">
                <Level y={642} from={0} to={650} color="#696969" />
                <Level y={664} from={622} to={650} color="#696969" />
                <path d={barPath(bars, RANGE)} stroke="#3d3d3d" />
                <path d={barPath(RANGE_SPECKS, RANGE)} stroke="#ff8c00" />
                <path d="M0 917.5H650" stroke="#000" />
                <path d={barPath(RANGE_DELTA.map(([x, y]): Bar => [x, Math.min(y, 1252), Math.max(y, 1252)]), RANGE)} stroke="#fff" />
                <text x="2" y="984" fill="#7d7d94">© 2016 NinjaTrader, LLC</text>
                <path d={barPath(base, RANGE)} stroke="#a9a9a9" />
                <path d={barPath(volume, RANGE)} stroke="#a9a9a9" />
                <path d={barPath(RANGE_VOLUME.map(([x, y]): Bar => [x, y, 1446]), RANGE)} stroke="#a9a9a9" />
                <path d="M650.5 570V987M0 880.5H726M0 930.5H726M0 982.5H650M0 986.5H650" stroke="#a9a9a9" />
                <PriceAxis
                    x={651}
                    labels={[
                        ['1,4440', 570], ['1,4430', 609], ['1,4420', 648], ['1,4410', 687], ['1,4400', 726],
                        ['1,4390', 765], ['1,4380', 804], ['1,4370', 843], ['200', 938],
                    ]}
                />
                <TimeAxis
                    y={987}
                    labels={[
                        ['00:45', 8], ['00:58', 60], ['01:11', 112], ['01:20', 164], ['01:30', 216], ['01:40', 268],
                        ['01:52', 320], ['02:00', 372], ['02:07', 424], ['02:12', 476], ['02:20', 528], ['02:36', 580],
                    ]}
                />
                <PriceTag x={652} y={664} width={36} label="1,4416" fill="#000" text="#c8c8c8" />
                <PriceTag x={652} y={917} width={9} label="0" fill="#fff" text="#151515" stroke="#fff" />
                <PriceTag x={652} y={980} width={15} label="12" fill="#a9a9a9" text="#151515" />
            </g>
        </svg>
    )
}

const FiveMinuteChart = () => {
    const volumeBars = (points: Point[], f: Frame) =>
        resample(points.map(([x, h]): Bar => [x, h, 0]), f, 3)
            .filter(([x, h]) => h > 1.5 && !(f === FIVE_B && x > 882 && x < 1175))
            .map(([x, h]) => {
                const height = Math.max(1, Math.round(h / 3))
                return <rect key={x} x={Math.round(f.x0 + x * f.kx)} y={986 - height} width="2" height={height} fill="url(#volume)" />
            })

    return (
        <svg className="block h-[979px] w-full bg-[#151515] font-['Liberation_Sans',sans-serif] text-[11px]" shapeRendering="crispEdges" fill="none">
            <defs>
                <linearGradient id="volume" x1="0" y1="0" x2="0" y2="1">
                    <stop offset="0" stopColor="#008080" />
                    <stop offset="0.5" stopColor="#046464" />
                    <stop offset="1" stopColor="#123030" />
                </linearGradient>
            </defs>
            <g transform="translate(-727 -31)">
                <Level y={53} from={728} to={1864} color="#696969" />
                <Level y={198} from={792} to={1864} color="#696969" />
                <Level y={463} from={1115} to={1864} color="#696969" />
                <Level y={615} from={1667} to={1864} color="#696969" />
                <Level y={506} from={728} to={1864} color="#008000" />
                <Level y={851} from={728} to={1864} color="#008000" />
                <Level y={960} from={728} to={1864} color="#008000" />
                <Level y={327} from={728} to={1162} color="#8b0000" />
                <Level y={697} from={1239} to={1864} color="#8b0000" />
                <path d="M728 69h205v206H728M728 55h61V36" stroke="#2f4f4f" strokeWidth="2" />
                <path d="M728 206.5h58" stroke="#6e6e00" strokeWidth="5" />
                <path d="M728 206.5h204" stroke="#8c8c00" />
                <path d="M1239.5 36V986M936.5 36V70" stroke="#808080" strokeDasharray="1 1" />
                <g stroke="#6e6e6e" strokeDasharray="3 1">
                    <path d={barPath(resample(FIVE_BARS_A, FIVE_A, 3), FIVE_A)} />
                    <path d={barPath(resample(FIVE_BARS_B, FIVE_B, 3), FIVE_B)} />
                </g>
                <path d={barPath(FIVE_SPECKS_A, FIVE_A)} stroke="#ff9a00" />
                <path d={barPath(FIVE_YELLOW_A, FIVE_A)} stroke="#ffff00" />
                <path d={barPath(FIVE_SPECKS_B, FIVE_B)} stroke="#ff9a00" />
                {volumeBars(FIVE_VOLUME_A, FIVE_A)}
                {volumeBars(FIVE_VOLUME_B, FIVE_B)}
                <text x="730" y="47" fill="#a9a9a9">AcmeVolumeProfile(6B 03-16 (5 Min),False,Left,False,C:\Users\Dima\Documents\AcmeVolumeProfile\,False,OnBreach,,,Solid,Color [A=255, R=21, G=21, B=21],Color [A=255, R=21, G=21, B=21],60,Color [A=255, R=21, G=21, B=21</text>
                <text x="730" y="984" fill="#a9a9a9">© 2016 NinjaTrader, LLC</text>
                <path d="M1864.5 36V987M728 986.5H1864" stroke="#a9a9a9" />
                <path d="M1835 43V62L1849 52.5zM1852 43h3v19h-3z" fill="#a9a9a9" />
                <rect x="1880.5" y="33.5" width="12" height="12" stroke="#a9a9a9" />
                <text x="1883" y="43" fill="#a9a9a9">F</text>
                <PriceAxis
                    x={1865}
                    labels={[
                        ['1,4560', 107], ['1,4540', 180], ['1,4520', 253], ['1,4500', 327], ['1,4480', 400], ['1,4460', 473],
                        ['1,4440', 547], ['1,4420', 620], ['1,4400', 693], ['1,4380', 767], ['1,4360', 840], ['1,4340', 913],
                    ]}
                />
                <TimeAxis
                    y={987}
                    labels={[
                        ['19:00', 771], ['21:00', 843], ['23:00', 915], ['2/6', 987], ['03:00', 1059], ['05:00', 1131], ['07:00', 1203],
                        ['2/8', 1311], ['13:00', 1378], ['15:00', 1444], ['17:00', 1515], ['19:00', 1587], ['2/9', 1803],
                    ]}
                />
                <text x="1645" y="1003" fill="#a9a9a9">21:</text>
                <PriceTag x={1866} y={737} width={36} label="1,4388" fill="#a9a9a9" text="#151515" />
            </g>
        </svg>
    )
}

const TrayPopup = () => (
    <div className="absolute bottom-0 left-[932px] grid h-[117px] w-[122px] grid-cols-3 grid-rows-3 place-items-center border border-b-0 border-[#3c3c3c] bg-[#242628]">
        <button type="button" aria-label="USB device">
            <svg width="16" height="18" viewBox="0 0 16 18" fill="none" stroke="#fff">
                <rect x="5" y="0.5" width="5" height="5" />
                <rect x="3.5" y="5.5" width="8" height="11" rx="1" />
                <path d="M10 13l2 3 4-4" strokeWidth="1.5" />
            </svg>
        </button>
        <button type="button" aria-label="Cloud drive">
            <svg width="17" height="14" viewBox="0 0 17 14" fill="#b4b4b4">
                <circle cx="5" cy="8" r="4.5" /><circle cx="10" cy="5" r="4.5" /><circle cx="12" cy="9" r="4.5" fill="#c4c4c4" stroke="#7a7a7a" strokeWidth="0.5" />
            </svg>
        </button>
        <button type="button" aria-label="Graphics settings">
            <svg width="16" height="16" viewBox="0 0 16 16">
                <rect width="16" height="16" fill="#2b3440" />
                <rect x="5" y="3" width="10" height="10" fill="#76b900" />
                <path d="M2 8c3-5 8-5 11 0-3 4-8 4-11 0z" fill="#76b900" stroke="#1d2a10" />
                <circle cx="8" cy="8" r="2" fill="none" stroke="#1d2a10" />
            </svg>
        </button>
        <button type="button" aria-label="Antivirus">
            <svg width="17" height="17" viewBox="0 0 17 17">
                <rect x="1" y="1" width="13" height="13" rx="4" fill="#e8f6f6" stroke="#1c9aa0" strokeWidth="1.5" />
                <path d="M4.5 7.5h6c0-4-6-4-6 0 0 4 4 4 6 2" fill="none" stroke="#0d7f86" strokeWidth="1.8" />
                <circle cx="12.5" cy="12.5" r="4" fill="#1b8fe0" />
                <path d="M12.5 11.5v3.5M12.5 9.5v1" stroke="#fff" strokeWidth="1.3" />
            </svg>
        </button>
        <button type="button" aria-label="Messenger">
            <svg width="16" height="16" viewBox="0 0 16 16">
                <circle cx="8" cy="8" r="6" fill="#7cbb00" /><circle cx="4.5" cy="4.5" r="3.5" fill="#7cbb00" /><circle cx="11.5" cy="11.5" r="3.5" fill="#7cbb00" />
                <path d="M5 8l2 2 4-4" stroke="#fff" strokeWidth="2" fill="none" />
            </svg>
        </button>
        <button type="button" aria-label="Antenna">
            <svg width="17" height="16" viewBox="0 0 17 16" fill="none" stroke="#fff" strokeWidth="2">
                <path d="M0 4h5l-2 10M6 2h6M8.5 2v9M11 5h6M14 5v10" />
            </svg>
        </button>
        <button type="button" aria-label="Screen capture">
            <svg width="17" height="17" viewBox="0 0 17 17" fill="none" stroke="#fff">
                <rect x="0.5" y="0.5" width="16" height="16" fill="#1e88c8" stroke="#62b8e8" />
                <path d="M8 12.5H3.5v-9h9V8M8 10H6V6h4v2" />
                <path d="M9 9l5 5M9 13V9h4" strokeWidth="1.5" />
            </svg>
        </button>
    </div>
)

const NinjaLeft = () => (
    <div className="flex min-w-0 flex-col border-r border-[#0078d7] bg-white">
        <section className="flex flex-col pt-[7px]">
            <NinjaToolbar symbol="6B 03-16" interval="60 Min" icon={<CandlesIcon />} />
            <div className="relative">
                <HourChart />
                <MenuDrop />
            </div>
        </section>
        <section className="flex flex-col">
            <header className="flex h-[30px] items-center pl-[8px] text-[11px] text-[#999]">
                <svg width="14" height="14" viewBox="0 0 14 14" aria-hidden="true">
                    <rect x="0.5" y="0.5" width="13" height="13" fill="#eef4fb" stroke="#9fb0c4" />
                    <path d="M5 1v12M9 1v12M1 5h12M1 9h12" stroke="#b9c7d8" />
                    <path d="M1 10 4 6 7 8 12 2" stroke="#1c4f9c" strokeWidth="1.5" fill="none" />
                    <path d="M1 4 5 2 8 6 12 7" stroke="#3cab3c" strokeWidth="1.5" fill="none" />
                </svg>
                <h1 className="ml-[6px] flex-1 whitespace-pre font-['Open_Sans',sans-serif]">6B 03-16 (1 Range)  09.02.2016</h1>
                <button className="mr-[2px] h-[20px] w-[34px] self-start border-2 border-[#0078d7] bg-[#e9e9e9] text-[12px] leading-none text-black" type="button">L</button>
                <button className="flex w-[46px] justify-center" type="button" aria-label="Minimize"><span className="h-px w-[10px] bg-[#999]" /></button>
                <button className="flex w-[45px] justify-center" type="button" aria-label="Maximize"><span className="size-[10px] border border-[#999]" /></button>
                <button className="flex w-[46px] justify-center" type="button" aria-label="Close">
                    <svg width="11" height="11" viewBox="0 0 11 11" stroke="#999"><path d="M0.5 0.5l10 10M10.5 0.5l-10 10" /></svg>
                </button>
            </header>
            <div className="pl-[3px]">
                <NinjaToolbar symbol="6B 03-16" interval="1 Range" icon={<BarsIcon />} />
            </div>
            <div className="relative">
                <RangeChart />
                <MenuDrop />
            </div>
        </section>
    </div>
)

const NinjaMiddle = () => (
    <section className="flex min-w-0 flex-col border-r border-[#0078d7] bg-white pt-[6px]">
        <div className="pl-[3px]">
            <NinjaToolbar symbol="6B 03-16" interval="5 Min" icon={<BarsIcon />} />
        </div>
        <div className="relative">
            <FiveMinuteChart />
            <MenuDrop />
            <TrayPopup />
        </div>
    </section>
)

type ToolProps = {
    label: string
    pressed?: boolean
    children: React.ReactNode
}

const Tool: React.FC<ToolProps> = ({ label, pressed, children }) => (
    <button
        className={
            pressed
                ? 'mx-px flex h-[23px] w-[26px] items-center justify-center border border-r-white border-b-white border-l-[#a0a0a0] border-t-[#a0a0a0] bg-[#f8f8f8]'
                : 'flex h-[23px] w-[28px] items-center justify-center'
        }
        type="button"
        aria-label={label}
    >
        {children}
    </button>
)

const DropTool: React.FC<ToolProps> = ({ label, children }) => (
    <button className="flex h-[23px] w-[37px] items-center justify-center gap-[5px]" type="button" aria-label={label}>
        {children}
        <Caret />
    </button>
)

const MtDivider = () => <span className="mx-[3px] h-[23px] w-px shrink-0 bg-[#a0a0a0]" />
const Grip = () => <span className="mx-px h-[19px] border-l-[3px] border-dotted border-[#a0a0a0]" />

type PlusPageProps = {
    lines?: boolean
}

const PlusPage: React.FC<PlusPageProps> = ({ lines }) => (
    <svg width="17" height="18" viewBox="0 0 17 18">
        <path d="M1.5 0.5h8l3 3v11h-11z" fill="#fff" stroke="#777" />
        {lines && <path d="M3 5h7M3 7h7M3 9h7M3 3h5" stroke="#999" />}
        <path d="M11 8v9M6.5 12.5h9" stroke="#0a8f0a" strokeWidth="4" />
        <path d="M11 9v7M7.5 12.5h7" stroke="#2fd32f" strokeWidth="2" />
    </svg>
)

const GlassIcon: React.FC<LensProps> = ({ sign }) => (
    <svg width="17" height="17" viewBox="0 0 17 17">
        <path d="M11 11l4 4" stroke="#c9a227" strokeWidth="3" strokeLinecap="round" />
        <circle cx="6.5" cy="6.5" r="5.5" fill="#d8ecfb" stroke="#3f8fd0" strokeWidth="1.5" />
        <path d={sign === 'plus' ? 'M3.5 6.5h6M6.5 3.5v6' : 'M3.5 6.5h6'} stroke="#1f6fb0" strokeWidth="1.5" />
    </svg>
)

const MtToolbar = () => (
    <div className="flex h-[27px] items-center border-b border-[#6d6d6d] bg-[#f0f0f0] pl-[2px] text-[11px] text-black">
        <Grip />
        <DropTool label="New chart">
            <svg width="18" height="16" viewBox="0 0 18 16">
                <rect x="0.5" y="0.5" width="13" height="11" fill="#fff" stroke="#3f7fb8" />
                <rect x="1" y="1" width="12" height="2" fill="#7fb2dd" />
                <path d="M12 5v10M7 10h10" stroke="#0a8f0a" strokeWidth="4" />
                <path d="M12 6v8M8 10h8" stroke="#2fd32f" strokeWidth="2" />
            </svg>
        </DropTool>
        <DropTool label="Profiles">
            <svg width="17" height="16" viewBox="0 0 17 16" fill="#fff" stroke="#3f7fb8">
                <rect x="4.5" y="4.5" width="12" height="11" /><rect x="0.5" y="0.5" width="12" height="11" />
                <path d="M1 2h11" stroke="#7fb2dd" strokeWidth="2" /><path d="M3 9h7M4 5v5" stroke="#777" />
            </svg>
        </DropTool>
        <MtDivider />
        <Tool label="Market watch">
            <svg width="16" height="17" viewBox="0 0 16 17">
                <rect x="0.5" y="0.5" width="15" height="16" fill="#fff" stroke="#3f8fd0" />
                <path d="M5 3l3 4H6v3H4V7H2z" fill="#2fae2f" /><path d="M10 14l3-4h-2V7H9v3H7z" fill="#e04a1c" />
            </svg>
        </Tool>
        <Tool label="Data window">
            <svg width="16" height="16" viewBox="0 0 16 16" fill="none" stroke="#555">
                <circle cx="8" cy="8" r="5.5" /><circle cx="8" cy="8" r="2" /><path d="M8 0v6M8 10v6M0 8h6M10 8h6" />
            </svg>
        </Tool>
        <Tool label="Navigator">
            <svg width="17" height="17" viewBox="0 0 17 17">
                <path d="M0.5 1.5h6l1 2h5v9h-12z" fill="#f4d67a" stroke="#b8923a" />
                <path d="M11 5l1.8 4 4 .4-3 2.800 1 4.300-3.800-2.300-3.800 2.300 1-4.300-3-2.800 4-.4z" fill="#ffd42a" stroke="#b8860b" strokeWidth="0.7" />
            </svg>
        </Tool>
        <Tool label="Terminal" pressed>
            <svg width="16" height="15" viewBox="0 0 16 15">
                <rect x="0.5" y="0.5" width="15" height="14" fill="#fff" stroke="#2f7fc8" />
                <rect x="1" y="1" width="3" height="13" fill="#2f7fc8" /><path d="M6 4h8M6 6h8M6 8h8M6 10h8" stroke="#b9cbe0" />
            </svg>
        </Tool>
        <Tool label="Strategy tester">
            <svg width="18" height="18" viewBox="0 0 18 18">
                <rect x="1.5" y="0.5" width="12" height="15" fill="#f4f8fc" stroke="#8a9bb0" />
                <circle cx="9" cy="8" r="4.5" fill="#c6e2f8" stroke="#4d8fc4" /><path d="M12 12l4 5" stroke="#c9a227" strokeWidth="2.5" />
            </svg>
        </Tool>
        <MtDivider />
        <button className="flex items-center gap-[3px] whitespace-nowrap pl-[5px] pr-[3px]" type="button"><PlusPage lines />Новый ордер</button>
        <Tool label="MetaEditor">
            <svg width="17" height="16" viewBox="0 0 17 16">
                <path d="M0.5 9 8 1l8 6-7 8z" fill="#e8b53a" stroke="#a87414" /><path d="M0.5 9l8.5 3 7-5" fill="none" stroke="#fff3c4" />
            </svg>
        </Tool>
        <button className="mr-[3px] flex items-center gap-[4px] whitespace-nowrap pl-[4px]" type="button">
            <svg width="18" height="18" viewBox="0 0 18 18">
                <path d="M1 6c2-6 12-6 14 0z" fill="#58b4e8" stroke="#2a7fb4" /><path d="M2 7h12l-3 9H6z" fill="#f0c94a" stroke="#b08a1c" />
                <circle cx="12.5" cy="12.5" r="4.5" fill="#e03020" /><rect x="11" y="11" width="3" height="3" fill="#fff" />
            </svg>
            Авто-торговля
        </button>
        <MtDivider />
        <Grip />
        <Tool label="Bar chart" pressed>
            <svg width="16" height="16" viewBox="0 0 16 16" shapeRendering="crispEdges"><path d="M3.5 1v14M1 13.5h14" stroke="#555" /><path d="M9.5 3v8M7 9.5h2M10 4.5h2" stroke="#0a8f0a" strokeWidth="2" /></svg>
        </Tool>
        <Tool label="Candlesticks">
            <svg width="16" height="16" viewBox="0 0 16 16" shapeRendering="crispEdges"><path d="M3.5 1v14M1 13.5h14" stroke="#555" /><path d="M9.5 0v12" stroke="#0a8f0a" /><rect x="7" y="2" width="5" height="8" fill="#22b422" /></svg>
        </Tool>
        <Tool label="Line chart">
            <svg width="16" height="16" viewBox="0 0 16 16"><path d="M3.5 1v14M1 13.5h14" stroke="#555" /><path d="M4 11l4-6 3 1 4 4" stroke="#2fae2f" fill="none" /></svg>
        </Tool>
        <MtDivider />
        <Tool label="Zoom in"><GlassIcon sign="plus" /></Tool>
        <Tool label="Zoom out"><GlassIcon sign="minus" /></Tool>
        <Tool label="Tile windows">
            <svg width="16" height="16" viewBox="0 0 16 16" shapeRendering="crispEdges">
                <rect width="7" height="7" fill="#58a020" /><rect x="9" width="7" height="7" fill="#2060b0" /><rect y="9" width="7" height="7" fill="#2060b0" /><rect x="9" y="9" width="7" height="7" fill="#58a020" />
                <path d="M1 5h5M10 5h5M1 14h5M10 14h5" stroke="#fff" strokeWidth="2" />
            </svg>
        </Tool>
        <MtDivider />
        <Tool label="Auto scroll" pressed>
            <svg width="16" height="16" viewBox="0 0 16 16"><path d="M3.5 1v14M1 13.5h14" stroke="#555" /><path d="M8 4v7l5-3.5z" fill="#22b422" /></svg>
        </Tool>
        <Tool label="Chart shift" pressed>
            <svg width="16" height="16" viewBox="0 0 16 16"><path d="M3.5 1v14M1 13.5h14M9.5 1v10" stroke="#555" /><path d="M15 7h-4M13 5l-2 2 2 2" stroke="#d04010" fill="none" /></svg>
        </Tool>
        <MtDivider />
        <DropTool label="Indicators"><PlusPage lines /></DropTool>
        <DropTool label="Periods">
            <svg width="17" height="17" viewBox="0 0 17 17"><circle cx="8.5" cy="8.5" r="7" fill="#eaf4fc" stroke="#1c6fc0" strokeWidth="2.5" /><path d="M8.5 4v5h3" stroke="#333" fill="none" /></svg>
        </DropTool>
        <DropTool label="Templates">
            <svg width="16" height="15" viewBox="0 0 16 15"><rect x="0.5" y="0.5" width="15" height="14" fill="#fff" stroke="#3f7fb8" /><path d="M1 2h14" stroke="#3f7fb8" strokeWidth="3" /><path d="M3 7l3-2 3 2 4-2" stroke="#b03020" fill="none" /><path d="M1 9h14" stroke="#3f7fb8" /><path d="M3 12l3-1 3 1 4-1" stroke="#2fae2f" fill="none" /></svg>
        </DropTool>
        <MtDivider />
        <Grip />
        <Tool label="Cursor" pressed>
            <svg width="11" height="16" viewBox="0 0 11 16"><path d="M1 0v12l3-2.500 2.500 5.500 2-1-2.500-5.500 4-.5z" fill="#444" /></svg>
        </Tool>
        <Tool label="Crosshair">
            <svg width="15" height="15" viewBox="0 0 15 15" shapeRendering="crispEdges"><path d="M7.5 0v6M7.5 9v6M0 7.5h6M9 7.5h6" stroke="#444" /></svg>
        </Tool>
        <MtDivider />
        <Tool label="Vertical line"><span className="h-[13px] w-px bg-[#444]" /></Tool>
        <Tool label="Horizontal line"><span className="h-px w-[12px] bg-[#444]" /></Tool>
        <Tool label="Trendline"><svg width="13" height="13" viewBox="0 0 13 13"><path d="M0.5 12.5l12-12" stroke="#444" /></svg></Tool>
        <Tool label="Equidistant channel">
            <svg width="17" height="17" viewBox="0 0 17 17"><path d="M1 12 9 2M5 13l8-10M2 9l2 3 2-7 3 5 2-7 2 4" stroke="#555" fill="none" /><text x="11" y="17" fontSize="8" fill="#222">E</text></svg>
        </Tool>
        <Tool label="Fibonacci retracement">
            <svg width="16" height="17" viewBox="0 0 16 17"><path d="M0 2.5h14M0 5.5h14M0 8.5h14M0 11.5h9" stroke="#555" strokeDasharray="1 1" /><text x="10" y="17" fontSize="8" fill="#222">F</text></svg>
        </Tool>
        <Tool label="Text"><span className="text-[13px] text-[#444]">A</span></Tool>
        <Tool label="Text label"><span className="border border-dotted border-[#555] px-[2px] text-[10px] leading-[12px] text-[#444]">T</span></Tool>
        <DropTool label="Arrows">
            <svg width="15" height="14" viewBox="0 0 15 14"><path d="M3.5 0 7 4H5v3H2V4H0zM11 14l-3-4h2V7h3v3h2zM3 9l2 2 5-7" fill="#444" stroke="#444" strokeWidth="0.5" /></svg>
        </DropTool>
        <MtDivider />
        <Grip />
        <div className="flex font-['Liberation_Sans',sans-serif] text-[10px] text-[#333]">
            {['M1', 'M5', 'M15', 'M30', 'H1', 'H4', 'D1', 'W1', 'MN'].map((frame) => (
                <Tool key={frame} label={frame} pressed={frame === 'M1'}>{frame}</Tool>
            ))}
        </div>
        <MtDivider />
        <label className="ml-auto flex h-[23px] w-[172px] items-center border border-[#b4b4b4] bg-white pr-[3px]">
            <input className="min-w-0 flex-1 outline-none" type="text" aria-label="Search" />
            <Search className="size-[14px] -scale-x-100 text-[#2f6fd0]" strokeWidth={3} />
        </label>
        <button className="ml-[2px] flex h-[23px] w-[28px] items-center justify-center border border-[#c8c8c8] bg-[#e4e4e4]" type="button" aria-label="Messages">
            <span className="h-[14px] w-[15px] bg-[#5f7fb4] text-[10px] font-bold leading-[14px] text-white">5</span>
        </button>
    </div>
)

const DealMark: React.FC<Deal> = ({ f, at, kind }) => (
    <g transform={`translate(${f.x0 + at[0] * f.kx} ${f.y0 + at[1] * f.ky})`}>
        {kind === 'close' && <path d="M-3.5 0 2-5V5z" fill="#daa520" stroke="#fff" strokeWidth="1.2" />}
        {kind !== 'close' && (
            <path d="M-4-2.5H0V-5L5 0 0 5V2.5H-4z" fill={kind === 'buy' ? '#0000ff' : '#ff0000'} stroke="#fff" strokeWidth="1.2" />
        )}
    </g>
)

const MT_PRICES: [string, number][] = [
    ['1.45510', 72], ['1.45425', 105], ['1.45335', 139], ['1.45245', 173], ['1.45155', 207], ['1.45065', 241], ['1.44980', 274],
    ['1.44890', 308], ['1.44800', 342], ['1.44710', 376], ['1.44625', 409], ['1.44535', 443], ['1.44445', 477], ['1.44355', 511],
    ['1.44270', 544], ['1.44180', 578], ['1.44090', 612], ['1.44000', 646], ['1.43910', 680], ['1.43825', 713], ['1.43735', 747],
    ['1.43645', 781], ['1.43555', 815],
]

const MT_TIMES = Array.from({ length: 27 }, (_, i) => {
    const minutes = 5 * 60 + 29 + 32 * (i - 1)
    const hh = String(Math.floor(minutes / 60)).padStart(2, '0')
    const mm = String(minutes % 60).padStart(2, '0')
    return i === 0 ? '8 Feb 2016' : `8 Feb ${hh}:${mm}`
})

const MtChart = () => (
    <svg className="block h-[828px] w-full bg-black text-[9px]" shapeRendering="crispEdges" fill="none">
        <g transform="translate(-1920 -45)">
            <g fill="#8b7b6b" stroke="#778899" strokeWidth="1.5">
                {DEALS.map((d) => (
                    <circle key={d.at.join()} cx={d.f.x0 + d.at[0] * d.f.kx} cy={d.f.y0 + d.at[1] * d.f.ky} r="9.5" />
                ))}
            </g>
            <path d={barPath(resample(MT_BARS_A, MT_A, 2, true), MT_A)} stroke="#00ff00" />
            <path d={barPath(resample(MT_BARS_B, MT_B, 2, true), MT_B)} stroke="#00ff00" />
            <path d={barPath(resample(MT_BARS_C, MT_C, 2, true), MT_C)} stroke="#00ff00" />
            <Level y={589} from={1925} to={3796} color="#778899" />
            <path d="M2560 753.5H3796" stroke="#ff0000" strokeDasharray="9 6 3 6" />
            <path d="M1925 753.5h9" stroke="#ff0000" />
            <path d="M1925 755.5H3796" stroke="#32cd32" strokeDasharray="9 6 3 6" />
            <Level y={844} from={1925} to={3796} color="#8b4513" />
            {LINKS.map(({ f, p, color }) => (
                <path
                    key={p.join()}
                    d={`M${f.x0 + p[0] * f.kx} ${f.y0 + p[1] * f.ky}L${f.x0 + p[2] * f.kx} ${f.y0 + p[3] * f.ky}`}
                    stroke={color}
                    strokeDasharray="3 3"
                />
            ))}
            {DEALS.map((d) => <DealMark key={d.at.join()} {...d} />)}
            {STOPS.map(({ f, at }) => <path key={at.join()} d={`M${px(f, at[0]) - 3.5} ${py(f, at[1]) + 0.5}h7`} stroke="#ff0000" />)}
            <path d="M1924.5 852V48.5H3796.5V852.5H1924" stroke="#fff" />
            <path d="M3602 49h9l-4.5 5z" fill="#778899" />
            <path d="M1928 55h7l-3.5 4z" fill="#fff" />
            <text x="1940" y="60" fill="#fff" xmlSpace="preserve">GBPUSD,M1  1.44155 1.44164 1.44147 1.44148</text>
            <text x="1931" y="752" fill="#fff">#1804941709 buy 0.20</text>
            {MT_PRICES.map(([label, y]) => (
                <g key={label}>
                    <path d={`M3797 ${y + 0.5}h3`} stroke="#fff" />
                    <text x="3801" y={y + 4} fill="#fff">{label}</text>
                </g>
            ))}
            <rect x="3797" y="584" width="41" height="12" fill="#fff" />
            <text x="3801" y="593" fill="#000">1.44148</text>
            <rect x="3797" y="838" width="41" height="11" fill="#8b4513" />
            <text x="3801" y="847" fill="#000">1.43479</text>
            {MT_TIMES.map((label, i) => (
                <g key={label}>
                    <path d={`M${1925.5 + i * 64} 853v3`} stroke="#fff" />
                    <text x={1924 + i * 64} y="865" fill="#fff">{label}</text>
                </g>
            ))}
        </g>
    </svg>
)

const COLUMNS = [
    { title: 'Ордер', width: 'w-[167px]' },
    { title: 'Время', width: 'w-[283px]' },
    { title: 'Тип', width: 'w-[128px]' },
    { title: 'Объем', width: 'w-[103px]' },
    { title: 'Символ', width: 'w-[128px]' },
    { title: 'Цена', width: 'w-[128px]' },
    { title: 'S / L', width: 'w-[128px]' },
    { title: 'T / P', width: 'w-[128px]' },
    { title: 'Время', width: 'w-[283px]' },
    { title: 'Цена', width: 'w-[128px]' },
    { title: 'Своп', width: 'w-[128px]' },
    { title: 'Прибыль', width: 'w-auto' },
]

const ORDERS = [
    ['1804939823', '2016.02.08 18:00:18', 'buy', '0.30', 'gbpusd', '1.43715', '1.43585', '0.00000', '2016.02.08 18:09:46', '1.44162', '0.00', '134.10'],
    ['1804940146', '2016.02.08 15:47:58', 'buy', '0.10', 'eurusd', '1.11013', '1.11016', '0.00000', '2016.02.08 18:40:08', '1.11868', '0.00', '85.50'],
]

const TABS = ['Торговля', 'Активы', 'История Счета', 'Новости', 'Алерты', 'Почта', 'Маркет', 'Сигналы', 'Библиотека', 'Эксперты', 'Журнал']

const Terminal = () => (
    <div className="flex border-t border-white pt-[3px]">
        <div className="flex w-[15px] shrink-0 flex-col items-center">
            <button className="h-[14px] text-[11px] font-bold leading-[12px]" type="button" aria-label="Close terminal">x</button>
            <div className="flex flex-1 items-center justify-center bg-[#c5d5e8]">
                <span className="rotate-180 text-[11px] leading-[14px] text-black [writing-mode:vertical-rl]">Терминал</span>
            </div>
        </div>
        <div className="flex min-w-0 flex-1 flex-col border-l border-t border-[#a0a0a0]">
            <div className="flex border-b-2 border-black">
                <table className="min-w-0 flex-1 table-fixed border-collapse text-right text-[11px]">
                    <thead className="bg-white">
                        <tr className="h-[24px] border-b border-[#b8b8b8]">
                            {COLUMNS.map((col, i) => (
                                <th key={i} className={`${col.width} border-r border-[#e2e2e2] px-[5px] py-0 font-normal first:text-left`}>
                                    {col.title}
                                    {i === 0 && <span className="ml-[12px] text-[9px] text-[#777]">/</span>}
                                </th>
                            ))}
                        </tr>
                    </thead>
                    <tbody>
                        {ORDERS.map((row, r) => (
                            <tr key={row[0]} className={r === 1 ? 'h-[20px] bg-[#3399ff] text-white' : 'h-[19px] bg-white text-black'}>
                                {row.map((cell, i) => (
                                    <td key={i} className="border-r border-[#c8c8c8] px-[2px] py-0 leading-[16px] first:text-left">
                                        {i === 0 ? (
                                            <span className="flex items-center gap-[6px] pl-[2px]">
                                                <svg width="14" height="15" viewBox="0 0 14 15" aria-hidden="true">
                                                    <path d="M1.5 0.5h7l3 3v11h-10z" fill="#fff" stroke="#777" />
                                                    <circle cx="10" cy="11" r="3.5" fill="#2f9be0" stroke="#1c6fa8" strokeWidth="0.5" />
                                                </svg>
                                                {cell}
                                            </span>
                                        ) : cell}
                                    </td>
                                ))}
                            </tr>
                        ))}
                    </tbody>
                </table>
                <div className="flex w-[17px] flex-col items-center justify-between bg-[#f0f0f0] py-[3px] text-[#505050]">
                    <ChevronUp size={10} strokeWidth={3} />
                    <span className="mt-[14px] h-[17px] w-[15px] bg-[#cdcdcd]" />
                    <ChevronDown size={10} strokeWidth={3} />
                </div>
                <span className="w-[4px]" />
            </div>
            <nav className="flex h-[21px] items-start text-[11px] text-[#808080]">
                {TABS.map((tab) => (
                    tab === 'История Счета' ? (
                        <button key={tab} className="-mt-[2px] -ml-px h-[21px] border-2 border-t-0 border-black bg-white px-[8px] leading-[18px] text-black" type="button">{tab}</button>
                    ) : (
                        <button key={tab} className="mt-[2px] flex h-[15px] items-center border-r border-[#808080] px-[10px] leading-[15px]" type="button">
                            {tab}
                            {tab === 'Почта' && <sub className="ml-[2px] text-[9px] font-bold text-red-600">21</sub>}
                        </button>
                    )
                ))}
            </nav>
        </div>
    </div>
)

const StatusBar = () => (
    <footer className="flex h-[19px] items-end border-t border-[#a0a0a0] text-[11px]">
        <span className="flex-1 pl-[2px]">Для справки, нажмите F1</span>
        <span className="h-[16px] w-[117px] border-l border-[#a0a0a0] pl-[5px] leading-[16px]">Default</span>
        <span className="h-[16px] w-[102px] border-l border-[#a0a0a0]" />
        <span className="h-[16px] w-[70px] border-l border-[#a0a0a0]" />
        <span className="h-[16px] w-[71px] border-l border-[#a0a0a0]" />
        <span className="h-[16px] w-[69px] border-l border-[#a0a0a0]" />
        <span className="h-[16px] w-[70px] border-l border-[#a0a0a0]" />
        <span className="h-[16px] w-[65px] border-l border-[#a0a0a0]" />
        <span className="flex h-[16px] w-[130px] items-center gap-[4px] border-l border-[#a0a0a0] pl-[5px]">
            <svg width="23" height="13" viewBox="0 0 23 13" shapeRendering="crispEdges" aria-hidden="true">
                {[0, 1, 2, 3, 4, 5, 6, 7].map((i) => (
                    <g key={i}>
                        <rect x={i * 3} y="0" width="2" height={10 - i} fill="#6b8e23" />
                        <rect x={i * 3} y={10 - i} width="2" height={3 + i} fill="#123f5e" />
                    </g>
                ))}
            </svg>
            11533/32 kb
        </span>
    </footer>
)

const MENU = ['Файл', 'Вид', 'Вставка', 'Графики', 'Сервис', 'Окно', 'Справка']

const MetaTrader = () => (
    <section className="flex min-h-screen min-w-0 flex-col border-l border-[#8a8a8a] bg-[#f0f0f0] font-['Open_Sans',sans-serif]">
        <header className="flex h-[18px] items-center border-b border-[#a0a0a0] pl-[5px] text-[11px] leading-[14px] text-[#9a9a9a]">
            <svg width="15" height="14" viewBox="0 0 15 14" fill="#fff" stroke="#4a86c8" aria-hidden="true">
                <rect x="0.5" y="0.5" width="9" height="8" /><rect x="4.5" y="4.5" width="10" height="9" /><path d="M6 11l2-4 2 4 3-3" fill="none" />
            </svg>
            <nav className="ml-[8px] flex flex-1 gap-[18px]">
                {MENU.map((item) => (
                    <button key={item} type="button"><u>{item[0]}</u>{item.slice(1)}</button>
                ))}
            </nav>
            <div className="flex gap-[2px] text-[#8899aa]">
                <button className="flex h-[16px] w-[18px] items-center justify-center bg-[#e4e4e4]" type="button" aria-label="Minimize">
                    <svg width="7" height="8" viewBox="0 0 7 8"><path d="M0 6.5h6" stroke="currentColor" strokeWidth="2" /></svg>
                </button>
                <button className="flex h-[16px] w-[18px] items-center justify-center bg-[#e4e4e4]" type="button" aria-label="Restore">
                    <svg width="9" height="9" viewBox="0 0 9 9" fill="none" stroke="currentColor"><path d="M3 2.5V1h5v4H6.5M1 3.5h5v5H1z" /></svg>
                </button>
                <button className="flex h-[16px] w-[18px] items-center justify-center bg-[#e4e4e4]" type="button" aria-label="Close">
                    <svg width="8" height="8" viewBox="0 0 8 8"><path d="M1 1l6 6M7 1L1 7" stroke="currentColor" strokeWidth="2" /></svg>
                </button>
            </div>
        </header>
        <MtToolbar />
        <MtChart />
        <nav className="flex h-[22px] items-start border-t border-white text-[11px] text-[#808080]">
            <span className="h-[3px] w-[6px] border-b border-black" />
            <button className="h-[20px] border-2 border-l border-t-0 border-black bg-white px-[11px] leading-[17px] text-black" type="button">GBPUSD,M1</button>
            <div className="flex h-[3px] flex-1 items-start border-b border-black">
                <button className="mt-[4px] h-[14px] border-r border-[#808080] px-[11px] leading-[14px]" type="button">EURUSD,M1</button>
                <span className="ml-auto mt-[3px] flex gap-[14px] pr-[8px] text-[8px] leading-[14px] text-[#909090]">
                    <button type="button" aria-label="Scroll tabs left">◀</button>
                    <button type="button" aria-label="Scroll tabs right">▶</button>
                </span>
            </div>
        </nav>
        <Terminal />
        <span className="h-[2px] bg-white" />
        <span className="flex-1" />
        <StatusBar />
    </section>
)

const App = () => (
    <main className="grid min-h-screen grid-cols-[727fr_1192fr_1921fr] items-start overflow-hidden bg-[#151515]">
        <NinjaLeft />
        <NinjaMiddle />
        <MetaTrader />
    </main>
)

export default App
